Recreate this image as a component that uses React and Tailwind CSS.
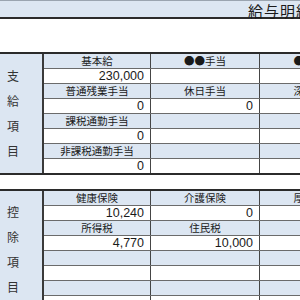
import clsx from "clsx";

const payRows = [
  { head: true, cells: ["基本給", "●●手当", "●●手当"] },
  { cells: ["230,000", "", ""] },
  { head: true, cells: ["普通残業手当", "休日手当", "深夜手当"] },
  { cells: ["0", "0", ""] },
  { head: true, cells: ["課税通勤手当", "", ""] },
  { cells: ["0", "", ""] },
  { head: true, cells: ["非課税通勤手当", "", ""] },
  { cells: ["0", "", ""] },
];

const deductRows = [
  { head: true, cells: ["健康保険", "介護保険", "厚生年金"] },
  { cells: ["10,240", "0", ""] },
  { head: true, cells: ["所得税", "住民税", ""] },
  { cells: ["4,770", "10,000", ""] },
  { head: true, cells: ["", "", ""] },
  { cells: ["", "", ""] },
  { head: true, cells: ["", "", ""] },
  { cells: ["", "", ""] },
];

function Section({ label, rows, top }) {
  return (
    <div className="flex border-y-2 border-[#2b2b2b]">
      <div
        className={clsx(
          "w-[44px] shrink-0 border-r-2 border-[#3a3a3a] bg-[#dce6f2] pl-[7px] flex flex-col text-[12px] leading-[25px] text-[#333]",
          top
        )}
      >
        {label.split("").map((ch, i) => (
          <span key={i}>{ch}</span>
        ))}
      </div>
      <div className="flex-1">
        {rows.map((r, i) => (
          <div
            key={i}
            className={clsx(
              "grid grid-cols-[107px_109px_110px]",
              i < rows.length - 1 ? "h-[15px] border-b border-[#6b6b6b]" : "h-[14px]",
              r.head ? "bg-[#dce6f2]" : "bg-white"
            )}
          >
            {r.cells.map((c, j) => (
              <div
                key={j}
                className={clsx(
                  "border-r border-[#454545] flex items-center whitespace-nowrap overflow-hidden",
                  r.head
                    ? "justify-center text-[10.5px] font-['Noto_Sans_CJK_JP',sans-serif]"
                    : "justify-end pr-[6px] text-[12.5px]"
                )}
              >
                {c}
              </div>
            ))}
          </div>
        ))}
      </div>
    </div>
  );
}

export default function App() {
  return (
    <div
      className="w-[300px] h-[300px] overflow-hidden bg-white text-[#1a1a1a]"
      style={{ fontFamily: '"Liberation Sans", "Noto Sans CJK JP", sans-serif' }}
    >
      <div className="w-[420px]">
        <div className="h-[19px] border-t border-b-2 border-t-[#9aa4b0] border-b-[#2b2b2b] bg-[#dce6f2]">
          <div className="pl-[248px] pt-[3px] text-[15px] leading-[15px] tracking-[1px] whitespace-nowrap">
            給与明細書
          </div>
        </div>
        <div className="h-[33px]" />
        <Section label="支給項目" rows={payRows} top="pt-[11px]" />
        <div className="h-[14px]" />
        <Section label="控除項目" rows={deductRows} top="pt-[10px]" />
      </div>
    </div>
  );
}
